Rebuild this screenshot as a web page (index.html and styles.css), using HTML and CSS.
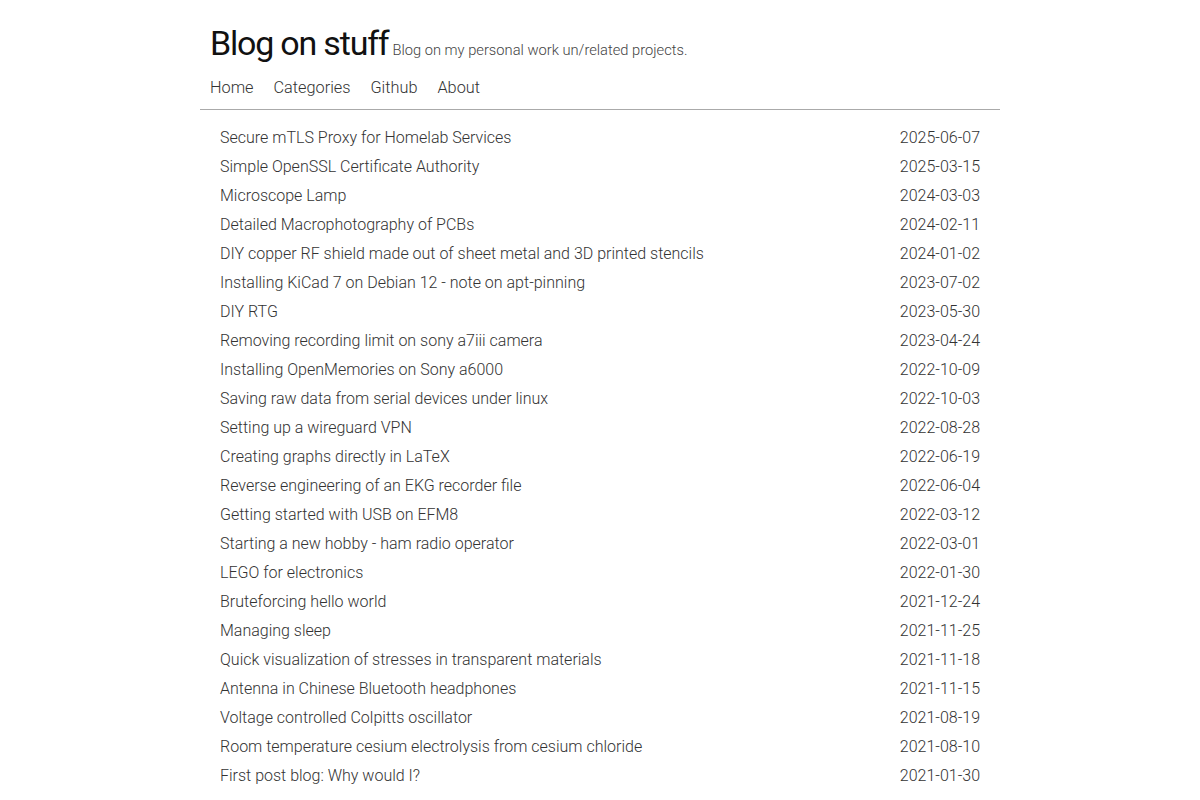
FILE: index.html
```html
<!DOCTYPE html>
<html lang="en">
<head>
  <meta charset="UTF-8">
  <title>Blog on stuff</title>
  <link rel="stylesheet" href="styles.css">
</head>
<body>

  <div class="page">
    <header class="header">
      <div class="brand">
        <a class="site-title" href="#">Blog on stuff</a>
        <span class="tagline">Blog on my personal work un/related projects.</span>
      </div>
      <nav class="nav">
        <a href="#">Home</a>
        <a href="#">Categories</a>
        <a href="#">Github</a>
        <a href="#">About</a>
      </nav>
    </header>

    <ul class="posts">
      <li><a href="#">Secure mTLS Proxy for Homelab Services</a><span class="date">2025-06-07</span></li>
      <li><a href="#">Simple OpenSSL Certificate Authority</a><span class="date">2025-03-15</span></li>
      <li><a href="#">Microscope Lamp</a><span class="date">2024-03-03</span></li>
      <li><a href="#">Detailed Macrophotography of PCBs</a><span class="date">2024-02-11</span></li>
      <li><a href="#">DIY copper RF shield made out of sheet metal and 3D printed stencils</a><span class="date">2024-01-02</span></li>
      <li><a href="#">Installing KiCad 7 on Debian 12 - note on apt-pinning</a><span class="date">2023-07-02</span></li>
      <li><a href="#">DIY RTG</a><span class="date">2023-05-30</span></li>
      <li><a href="#">Removing recording limit on sony a7iii camera</a><span class="date">2023-04-24</span></li>
      <li><a href="#">Installing OpenMemories on Sony a6000</a><span class="date">2022-10-09</span></li>
      <li><a href="#">Saving raw data from serial devices under linux</a><span class="date">2022-10-03</span></li>
      <li><a href="#">Setting up a wireguard VPN</a><span class="date">2022-08-28</span></li>
      <li><a href="#">Creating graphs directly in LaTeX</a><span class="date">2022-06-19</span></li>
      <li><a href="#">Reverse engineering of an EKG recorder file</a><span class="date">2022-06-04</span></li>
      <li><a href="#">Getting started with USB on EFM8</a><span class="date">2022-03-12</span></li>
      <li><a href="#">Starting a new hobby - ham radio operator</a><span class="date">2022-03-01</span></li>
      <li><a href="#">LEGO for electronics</a><span class="date">2022-01-30</span></li>
      <li><a href="#">Bruteforcing hello world</a><span class="date">2021-12-24</span></li>
      <li><a href="#">Managing sleep</a><span class="date">2021-11-25</span></li>
      <li><a href="#">Quick visualization of stresses in transparent materials</a><span class="date">2021-11-18</span></li>
      <li><a href="#">Antenna in Chinese Bluetooth headphones</a><span class="date">2021-11-15</span></li>
      <li><a href="#">Voltage controlled Colpitts oscillator</a><span class="date">2021-08-19</span></li>
      <li><a href="#">Room temperature cesium electrolysis from cesium chloride</a><span class="date">2021-08-10</span></li>
      <li><a href="#">First post blog: Why would I?</a><span class="date">2021-01-30</span></li>
    </ul>
  </div>

</body>
</html>
```

FILE: styles.css
```css
body {
  margin: 0;
  background: #fff;
  color: #333;
  font-family: 'Roboto', 'Liberation Sans', sans-serif;
  font-weight: 300;
}

a {
  color: inherit;
  text-decoration: none;
}

.page {
  width: 800px;
  margin: 0 auto;
}

.header {
  border-bottom: 1px solid #aaa;
  padding: 23px 10px 12px;
}

.brand {
  display: flex;
  align-items: baseline;
  gap: 4px;
}

.site-title {
  font-size: 34px;
  color: #111;
  font-weight: 400;
  letter-spacing: -1.2px;
}

.tagline {
  font-size: 14.7px;
  color: #444;
}

.nav {
  display: flex;
  gap: 20px;
  margin-top: 15px;
  font-size: 16.3px;
}

.posts {
  list-style: none;
  margin: 0;
  padding: 13px 20px;
}

.posts li {
  display: flex;
  justify-content: space-between;
  font-size: 16px;
  line-height: 29px;
}
```
